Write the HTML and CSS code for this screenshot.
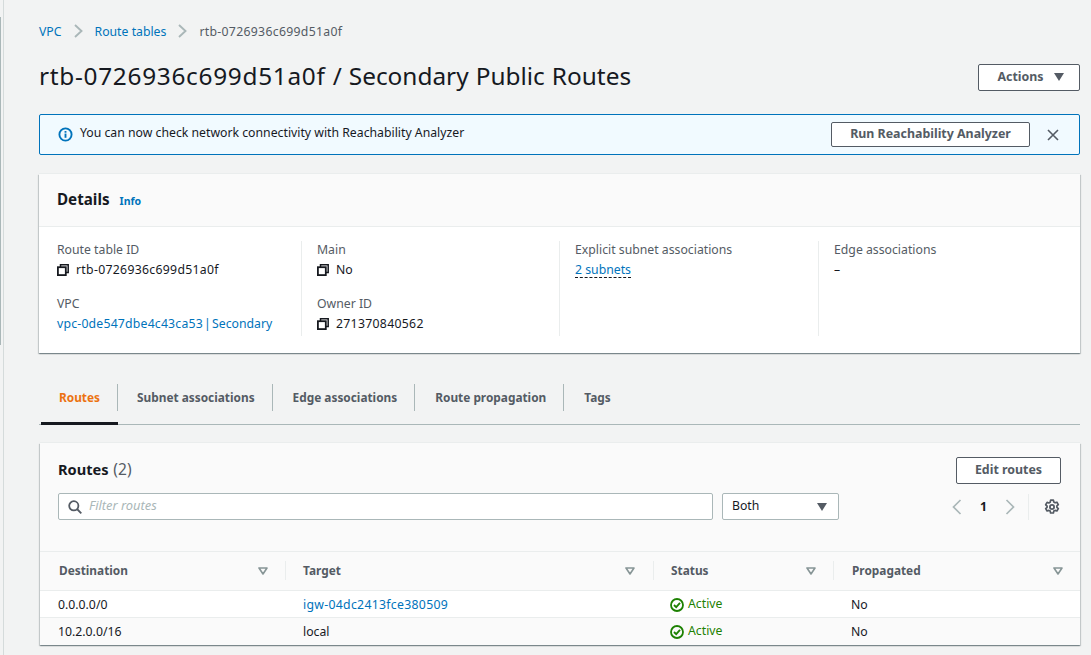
FILE: index.html
```html
<!DOCTYPE html>
<html lang="en">
<head>
  <meta charset="UTF-8" />
  <title>Route table | VPC</title>
  <link rel="stylesheet" href="styles.css">
</head>
<body>

<svg width="0" height="0" class="defs">
  <symbol id="copy" viewBox="0 0 12 12">
    <path d="M3.500 3V.8h7.700v7.700H9" fill="none" stroke="currentColor" stroke-width="1.500"/>
    <rect x=".9" y="3.200" width="7.900" height="7.900" fill="none" stroke="currentColor" stroke-width="1.800"/>
  </symbol>
  <symbol id="filterCaret" viewBox="0 0 10 8">
    <path d="M1 1h8L5 7z" fill="none" stroke="currentColor" stroke-width="1.600" stroke-linejoin="round"/>
  </symbol>
  <symbol id="caret" viewBox="0 0 10 8">
    <path d="M0 0h10L5 8z" fill="currentColor"/>
  </symbol>
  <symbol id="ok" viewBox="0 0 14 14">
    <circle cx="7" cy="7" r="6" fill="none" stroke="currentColor" stroke-width="1.800"/>
    <path d="M4 7l2.200 2.200L10 4.800" fill="none" stroke="currentColor" stroke-width="1.800"/>
  </symbol>
</svg>

<div class="rail"></div>
<div class="railEdge"></div>

<div class="page">
  <nav class="crumbs">
    <a href="#">VPC</a>
    <svg class="crumbSep" viewBox="0 0 9 14"><path d="M1 1l6.500 6L1 13" fill="none" stroke="currentColor" stroke-width="1.900"/></svg>
    <a href="#">Route tables</a>
    <svg class="crumbSep" viewBox="0 0 9 14"><path d="M1 1l6.500 6L1 13" fill="none" stroke="currentColor" stroke-width="1.900"/></svg>
    <span class="id">rtb-0726936c699d51a0f</span>
  </nav>

  <header class="pageHead">
    <h1><span class="idBig">rtb-0726936c699d51a0f</span> / Secondary Public Routes</h1>
    <button class="btn btnActions"><span>Actions</span> <svg class="btnCaret"><use href="#caret"/></svg></button>
  </header>

  <div class="notice">
    <svg class="noticeIcon" viewBox="0 0 16 16">
      <circle cx="8" cy="8" r="6.500" fill="none" stroke="currentColor" stroke-width="2"/>
      <rect x="7" y="7" width="2" height="4.500" fill="currentColor"/>
      <rect x="7" y="4.300" width="2" height="1.800" fill="currentColor"/>
    </svg>
    <span class="noticeText">You can now check network connectivity with Reachability Analyzer</span>
    <button class="btn btnNotice">Run Reachability Analyzer</button>
    <svg class="noticeClose" viewBox="0 0 12 12"><path d="M1 1l10 10M11 1L1 11" fill="none" stroke="currentColor" stroke-width="1.600"/></svg>
  </div>

  <section class="card details">
    <div class="cardHead">
      <h2>Details</h2>
      <a href="#" class="info">Info</a>
    </div>
    <div class="detailGrid">
      <div class="col">
        <div class="field">
          <div class="label">Route table ID</div>
          <div class="value"><svg class="copy"><use href="#copy"/></svg><span class="id">rtb-0726936c699d51a0f</span></div>
        </div>
        <div class="field">
          <div class="label">VPC</div>
          <div class="value"><a href="#" class="vpcLink"><span class="idVpc">vpc-0de547dbe4c43ca53</span> | Secondary</a></div>
        </div>
      </div>
      <div class="col">
        <div class="field">
          <div class="label">Main</div>
          <div class="value"><svg class="copy"><use href="#copy"/></svg>No</div>
        </div>
        <div class="field">
          <div class="label">Owner ID</div>
          <div class="value"><svg class="copy"><use href="#copy"/></svg><span class="id">271370840562</span></div>
        </div>
      </div>
      <div class="col">
        <div class="field">
          <div class="label">Explicit subnet associations</div>
          <div class="value"><a href="#" class="dashed">2 subnets</a></div>
        </div>
      </div>
      <div class="col">
        <div class="field">
          <div class="label">Edge associations</div>
          <div class="value">–</div>
        </div>
      </div>
    </div>
  </section>

  <div class="tabs">
    <div class="tab active"><span>Routes</span></div>
    <div class="tab"><span>Subnet associations</span></div>
    <div class="tab"><span>Edge associations</span></div>
    <div class="tab"><span>Route propagation</span></div>
    <div class="tab"><span>Tags</span></div>
  </div>

  <section class="card routes">
    <div class="routesHead">
      <h2>Routes <span class="count">(2)</span></h2>
      <button class="btn btnEdit">Edit routes</button>
    </div>
    <div class="toolbar">
      <div class="search">
        <svg class="searchIcon" viewBox="0 0 14 14"><circle cx="5.800" cy="5.800" r="4.600" fill="none" stroke="currentColor" stroke-width="1.800"/><path d="M9 9l4.300 4.300" stroke="currentColor" stroke-width="1.800"/></svg>
        <span class="placeholder">Filter routes</span>
      </div>
      <div class="select"><span class="selectText">Both</span> <svg class="selectCaret"><use href="#caret"/></svg></div>
      <div class="pager">
        <svg class="pageArrow" viewBox="0 0 10 16"><path d="M8.500 1L1.500 8l7 7" fill="none" stroke="currentColor" stroke-width="1.700"/></svg>
        <span class="pageNum">1</span>
        <svg class="pageArrow" viewBox="0 0 10 16"><path d="M1.500 1l7 7-7 7" fill="none" stroke="currentColor" stroke-width="1.700"/></svg>
      </div>
      <div class="settings">
        <svg class="gear" viewBox="0 0 16 16">
          <path d="M6.600 1.200h2.800l.4 1.900 1.300.7 1.800-.6 1.400 2.400-1.400 1.300v1.400l1.400 1.300-1.400 2.400-1.800-.6-1.300.7-.4 1.900H6.600l-.4-1.900-1.300-.7-1.800.6-1.400-2.400 1.400-1.300V7.100L1.700 5.800l1.400-2.400 1.800.6 1.300-.7z" fill="none" stroke="currentColor" stroke-width="1.700" stroke-linejoin="round"/>
          <circle cx="8" cy="8" r="2.100" fill="none" stroke="currentColor" stroke-width="1.800"/>
        </svg>
      </div>
    </div>

    <table class="routeTable">
      <colgroup>
        <col class="c1"><col class="c2"><col class="c3"><col class="c4">
      </colgroup>
      <thead>
        <tr>
          <th><div class="thIn"><span class="thText">Destination</span> <svg class="sort"><use href="#filterCaret"/></svg></div></th>
          <th><div class="thIn"><span class="thText">Target</span> <svg class="sort"><use href="#filterCaret"/></svg></div></th>
          <th><div class="thIn"><span class="thText">Status</span> <svg class="sort"><use href="#filterCaret"/></svg></div></th>
          <th><div class="thIn"><span class="thText">Propagated</span> <svg class="sort"><use href="#filterCaret"/></svg></div></th>
        </tr>
      </thead>
      <tbody>
        <tr>
          <td>0.0.0.0/0</td>
          <td><a href="#" class="id">igw-04dc2413fce380509</a></td>
          <td><span class="status"><svg class="okIcon"><use href="#ok"/></svg><span class="statusText">Active</span></span></td>
          <td>No</td>
        </tr>
        <tr>
          <td>10.2.0.0/16</td>
          <td>local</td>
          <td><span class="status"><svg class="okIcon"><use href="#ok"/></svg><span class="statusText">Active</span></span></td>
          <td>No</td>
        </tr>
      </tbody>
    </table>
  </section>
</div>

</body>
</html>
```

FILE: styles.css
```css
* {
  box-sizing: border-box;
}
html, body {
  margin: 0;
  height: 655px;
  overflow: hidden;
}
body {
  font-family: "Noto Sans", "Open Sans", sans-serif;
  font-size: 12.25px;
  color: #16191f;
  background-color: #f2f3f3;
}
a {
  color: #0073bb;
  text-decoration: none;
}
.defs {
  position: absolute;
}
.rail {
  position: absolute;
  left: 3px;
  top: 0;
  width: 1px;
  height: 655px;
  background: #d5dbdb;
}
.railEdge {
  position: absolute;
  left: 0;
  top: 17px;
  width: 1px;
  height: 328px;
  background: #aab7b8;
}
.page {
  padding: 0 11px 0 39px;
}
.id {
  letter-spacing: 0.3px;
}
.idVpc {
  letter-spacing: 0.2px;
}
.idBig {
  letter-spacing: 0.7px;
}

.crumbs {
  display: flex;
  align-items: center;
  height: 63px;
  color: #545b64;
  padding-bottom: 1px;
}
.crumbSep {
  width: 9px;
  height: 14px;
  margin: 0 12px;
  color: #aab7b8;
}

.pageHead {
  display: flex;
  justify-content: space-between;
  align-items: center;
  height: 28px;
}
h1 {
  margin: 0 0 3px;
  font-size: 24.4px;
  font-weight: 400;
  word-spacing: 0.7px;
  white-space: nowrap;
}
.btn {
  font-family: inherit;
  font-size: 12.4px;
  font-weight: 700;
  color: #545b64;
  background: #fff;
  border: 1px solid #545b64;
  border-radius: 2px;
  padding: 0;
}
.btnActions {
  display: flex;
  align-items: center;
  justify-content: center;
  gap: 10px;
  width: 102px;
  height: 27px;
  padding-left: 3px;
}
.btnActions span {
  margin-bottom: 2px;
}
.btnCaret {
  width: 10px;
  height: 8px;
}

.notice {
  display: flex;
  align-items: center;
  height: 41px;
  margin-top: 23px;
  padding: 0 20px 0 18px;
  background: #f1faff;
  border: 1px solid #0073bb;
  border-radius: 2px;
}
.noticeIcon {
  width: 15px;
  height: 15px;
  color: #0073bb;
  margin-right: 7px;
}
.noticeText {
  flex: 1;
  padding-bottom: 4px;
  color: #16191f;
}
.btnNotice {
  width: 199px;
  height: 25px;
  padding-bottom: 2px;
}
.noticeClose {
  width: 12px;
  height: 12px;
  margin-left: 17px;
  color: #545b64;
  flex: none;
}

.card {
  background: #fff;
  box-shadow: 0 -1px 0 0 #eaeded, 0 1px 1px 0 rgba(0, 28, 36, 0.3), 1px 1px 1px 0 rgba(0, 28, 36, 0.15), -1px 1px 1px 0 rgba(0, 28, 36, 0.15);
}
.details {
  margin-top: 19px;
  height: 179px;
}
.cardHead {
  display: flex;
  align-items: baseline;
  gap: 10px;
  height: 53px;
  padding: 15px 18px 0;
  background: #fafafa;
  border-bottom: 1px solid #eaeded;
}
h2 {
  margin: 0;
  font-size: 15.2px;
  font-weight: 700;
}
.info {
  font-size: 10.5px;
  font-weight: 700;
}
.detailGrid {
  display: grid;
  grid-template-columns: 263px 258px 259px 1fr;
  padding: 14px 0 0 0;
}
.col {
  height: 95px;
  padding: 0 10px 0 18px;
  border-right: 1px solid #eaeded;
}
.col + .col {
  padding-left: 15px;
}
.col:last-child {
  border-right: 0;
}
.field {
  height: 54px;
}
.label {
  color: #545b64;
  line-height: 18px;
}
.value {
  display: flex;
  align-items: center;
  margin-top: 1px;
  line-height: 20px;
}
.vpcLink {
  word-spacing: -2px;
}
.copy {
  width: 12px;
  height: 12px;
  margin-right: 7px;
  color: #16191f;
}
.dashed {
  margin-top: 2px;
  border-bottom: 1px dashed #16191f;
  line-height: 15px;
  color: #0073bb;
}

.tabs {
  display: flex;
  height: 54px;
  margin-top: 18px;
  border-bottom: 1px solid #aab7b8;
}
.tab {
  position: relative;
  height: 54px;
  padding-top: 13px;
  font-size: 11.85px;
  font-weight: 700;
  color: #545b64;
}
.tab span {
  display: block;
  padding: 0 17px 0 20px;
  height: 27px;
  line-height: 27px;
  border-right: 1px solid #aab7b8;
}
.tab:last-child span {
  border-right: 0;
}
.tab.active {
  margin-left: 2px;
  color: #ec7211;
  border-bottom: 3px solid #16191f;
}
.tab.active span {
  padding-left: 18px;
}
.tab.active + .tab span {
  padding-left: 19px;
}

.routes {
  margin-top: 18px;
  height: 202px;
  margin-left: 1px;
  background: #fafafa;
}
.routesHead {
  display: flex;
  justify-content: space-between;
  align-items: flex-start;
  height: 50px;
  padding: 14px 19px 0 18px;
}
.routesHead h2 {
  margin-top: 2px;
  font-size: 14.6px;
  line-height: 20px;
}
.count {
  margin-left: 1px;
  font-size: 15.5px;
  font-weight: 400;
  color: #545b64;
}
.btnEdit {
  width: 105px;
  height: 27px;
  padding-bottom: 2px;
}
.toolbar {
  display: flex;
  align-items: center;
  padding: 0 18px;
  height: 27px;
}
.search {
  display: flex;
  align-items: center;
  width: 655px;
  height: 27px;
  padding-left: 9px;
  background: #fff;
  border: 1px solid #aab7b8;
  border-radius: 2px;
  flex: none;
}
.searchIcon {
  width: 14px;
  height: 14px;
  color: #545b64;
  margin-right: 7px;
}
.placeholder {
  margin-bottom: 3px;
  font-size: 12.9px;
  font-style: italic;
  color: #aab7b8;
}
.select {
  display: flex;
  align-items: center;
  justify-content: space-between;
  width: 117px;
  height: 27px;
  margin-left: 9px;
  padding: 0 11px 0 9px;
  background: #fff;
  border: 1px solid #aab7b8;
  border-radius: 2px;
}
.selectText {
  margin-bottom: 2px;
}
.selectCaret {
  width: 10px;
  height: 8px;
  color: #545b64;
}
.pager {
  display: flex;
  align-items: center;
  margin-left: 113px;
  width: 76px;
  color: #aab7b8;
}
.pageArrow {
  width: 10px;
  height: 16px;
}
.pageNum {
  width: 43px;
  text-align: center;
  font-weight: 700;
  color: #16191f;
}
.settings {
  display: flex;
  align-items: center;
  padding-left: 15px;
  height: 26px;
  border-left: 1px solid #eaeded;
}
.gear {
  width: 16px;
  height: 16px;
  color: #545b64;
}

.routeTable {
  width: 100%;
  margin-top: 31px;
  border-collapse: collapse;
  table-layout: fixed;
}
.c1 { width: 246px; }
.c2 { width: 368px; }
.c3 { width: 180px; }
th {
  height: 39px;
  padding: 0 0 1px;
  text-align: left;
  font-size: 11.85px;
  color: #545b64;
  border-top: 1px solid #eaeded;
  border-bottom: 1px solid #eaeded;
}
.thIn {
  display: flex;
  align-items: center;
  justify-content: space-between;
  height: 19px;
  padding: 0 17px;
  border-right: 1px solid #eaeded;
}
.thText {
  margin-bottom: 2px;
}
th:first-child .thIn {
  padding-left: 19px;
}
th:nth-child(2) .thIn {
  padding-right: 18px;
}
th:last-child .thIn {
  border-right: 0;
  padding: 0 17px 0 18px;
}
.sort {
  width: 10px;
  height: 8px;
  color: #879596;
}
td {
  height: 27px;
  padding: 1px 0 0 17px;
  color: #16191f;
  background: #fff;
  border-bottom: 1px solid #eaeded;
}
td:first-child {
  padding-left: 18px;
}
tr:last-child td {
  background: #fafafa;
  border-bottom: 0;
}
.status {
  display: flex;
  align-items: center;
  margin-left: -1px;
  color: #1d8102;
}
.statusText {
  margin-bottom: 2px;
}
.okIcon {
  width: 14px;
  height: 14px;
  margin-right: 4px;
}
```
